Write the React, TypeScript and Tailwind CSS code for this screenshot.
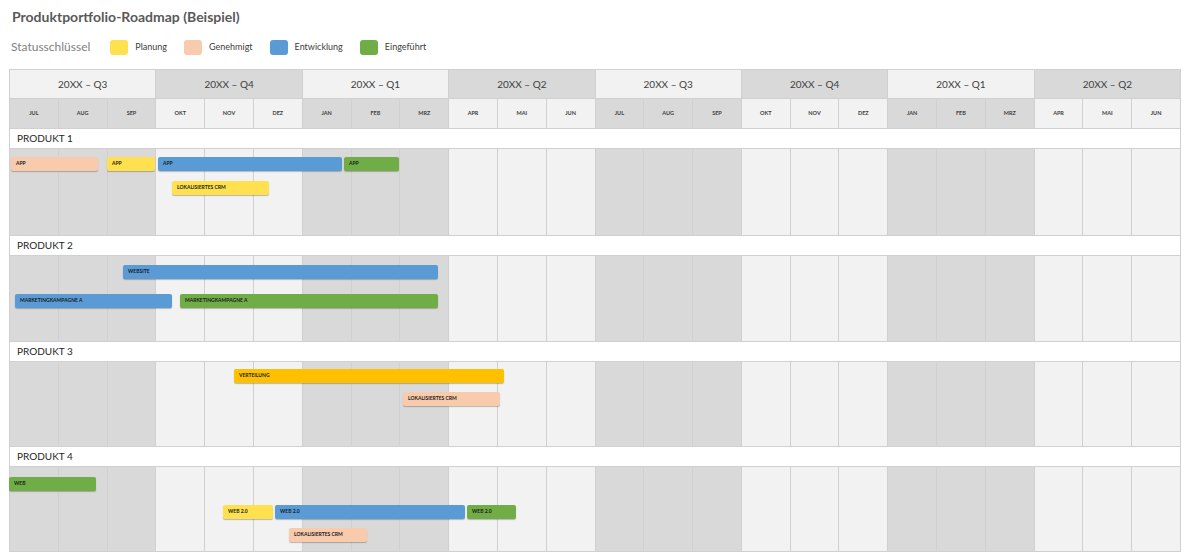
import React from "react";

const months = ["JUL","AUG","SEP","OKT","NOV","DEZ","JAN","FEB","MRZ","APR","MAI","JUN","JUL","AUG","SEP","OKT","NOV","DEZ","JAN","FEB","MRZ","APR","MAI","JUN"];
const quarters = ["20XX – Q3","20XX – Q4","20XX – Q1","20XX – Q2","20XX – Q3","20XX – Q4","20XX – Q1","20XX – Q2"];
const C: Record<string, string> = { y: "#ffe14f", p: "#f8cbad", b: "#5b9bd5", g: "#70ad47", a: "#ffc000" };

type Bar = { l: number; r: number; t: number; c: string; label: string };
const products: { name: string; h: number; bars: Bar[] }[] = [
  { name: "PRODUKT 1", h: 87, bars: [
    { l: 11, r: 98, t: 8, c: "p", label: "APP" },
    { l: 107, r: 155, t: 8, c: "y", label: "APP" },
    { l: 158, r: 342, t: 8, c: "b", label: "APP" },
    { l: 344, r: 399, t: 8, c: "g", label: "APP" },
    { l: 172, r: 269, t: 32, c: "y", label: "LOKALISIERTES CRM" },
  ]},
  { name: "PRODUKT 2", h: 86, bars: [
    { l: 123, r: 438, t: 9, c: "b", label: "WEBSITE" },
    { l: 15, r: 172, t: 38, c: "b", label: "MARKETINGKAMPAGNE A" },
    { l: 180, r: 438, t: 38, c: "g", label: "MARKETINGKAMPAGNE A" },
  ]},
  { name: "PRODUKT 3", h: 85, bars: [
    { l: 234, r: 504, t: 7, c: "a", label: "VERTEILUNG" },
    { l: 403, r: 500, t: 30, c: "p", label: "LOKALISIERTES CRM" },
  ]},
  { name: "PRODUKT 4", h: 85, bars: [
    { l: 9, r: 96, t: 10, c: "g", label: "WEB" },
    { l: 223, r: 273, t: 38, c: "y", label: "WEB 2.0" },
    { l: 275, r: 465, t: 38, c: "b", label: "WEB 2.0" },
    { l: 467, r: 516, t: 38, c: "g", label: "WEB 2.0" },
    { l: 289, r: 367, t: 61, c: "p", label: "LOKALISIERTES CRM" },
  ]},
];

const dark = (i: number) => Math.floor(i / 3) % 2 === 0;

export default function App() {
  return (
    <div className="w-[1191px] h-[556px] bg-white text-[#404040] overflow-hidden" style={{ fontFamily: "'Lato', 'Liberation Sans', sans-serif" }}>
      <div className="pl-[12px] pt-[6px] text-[14px] font-bold text-[#595959]">Produktportfolio-Roadmap (Beispiel)</div>
      <div className="flex items-center pl-[11px] mt-[12px] h-[16px] text-[9px] text-[#404040]">
        <span className="text-[12px] text-[#7f7f7f] mr-[20px]">Statusschlüssel</span>
        {[["y","Planung"],["p","Genehmigt"],["b","Entwicklung"],["g","Eingeführt"]].map(([c,t]) => (
          <div key={t} className="flex items-center mr-[17px]">
            <span className="w-[18px] h-[15px] rounded-[3px] mr-[7px]" style={{ background: C[c] }} />
            <span>{t}</span>
          </div>
        ))}
      </div>
      <div className="ml-[9px] mt-[14px] w-[1172px] border-l border-t border-[#d0d0d0]">
        <div className="grid grid-cols-8 h-[29px]">
          {quarters.map((q, i) => (
            <div key={i} className={`flex items-center justify-center text-[10px] border-r border-b border-[#d0d0d0] ${i % 2 ? "bg-[#d9d9d9]" : "bg-[#f2f2f2]"}`}>{q}</div>
          ))}
        </div>
        <div className="grid grid-cols-24 h-[30px]">
          {months.map((m, i) => (
            <div key={i} className={`flex items-center justify-center text-[5.5px] font-bold border-r border-b border-[#d0d0d0] ${dark(i) ? "bg-[#d9d9d9]" : "bg-[#f2f2f2]"}`}>{m}</div>
          ))}
        </div>
        {products.map((p) => (
          <div key={p.name}>
            <div className="h-[20px] flex items-center pl-[7px] text-[10px] text-[#262626] bg-white border-r border-b border-[#d0d0d0]">{p.name}</div>
            <div className="relative grid grid-cols-24" style={{ height: p.h }}>
              {months.map((_, i) => (
                <div key={i} className={`border-r border-b border-[#d0d0d0] ${dark(i) ? "bg-[#d9d9d9]" : "bg-[#f2f2f2]"}`} />
              ))}
              {p.bars.map((b, i) => (
                <div key={i} className="absolute h-[14px] rounded-[2px] flex items-center pl-[5px] text-[5px] font-bold text-[#1a1a1a] shadow-[0_1px_1px_rgba(0,0,0,0.25)] whitespace-nowrap"
                  style={{ left: b.l - 10, width: b.r - b.l, top: b.t, background: C[b.c] }}>{b.label}</div>
              ))}
            </div>
          </div>
        ))}
      </div>
    </div>
  );
}
